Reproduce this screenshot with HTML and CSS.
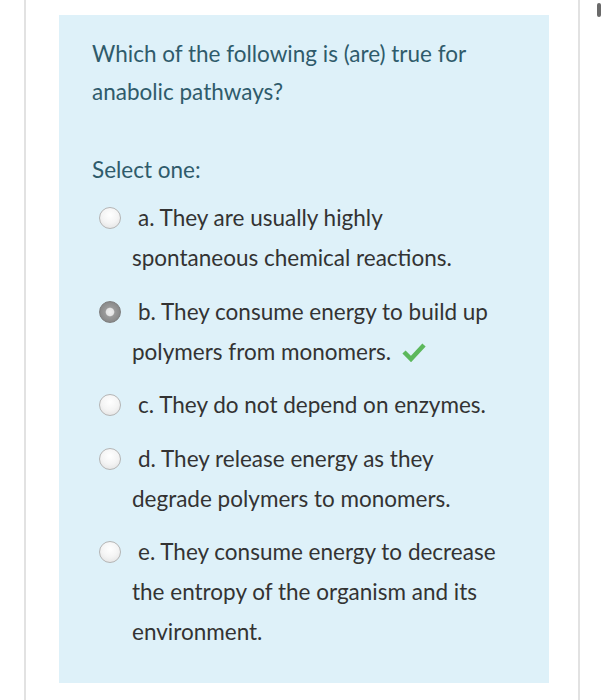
FILE: index.html
```
<!DOCTYPE html>
<html>
<head>
<meta charset="utf-8">
<link rel="stylesheet" href="styles.css">
</head>
<body>
<div class="page">
  <div class="card">
    <div class="qbox">
      <div class="qtext">Which of the following is (are) true for anabolic pathways?</div>
      <div class="prompt">Select one:</div>
      <div class="answers">
        <div class="opt"><span class="radio"></span><span class="label">a. They are usually highly spontaneous chemical reactions.</span></div>
        <div class="opt"><span class="radio checked"></span><span class="label">b. They consume energy to build up polymers from monomers. <svg class="tick" width="26" height="20" viewBox="0 0 26 20"><polyline points="3,10 10,17 23,3" fill="none" stroke="#5cb85c" stroke-width="4.5" stroke-linejoin="miter" stroke-linecap="butt"/></svg></span></div>
        <div class="opt"><span class="radio"></span><span class="label">c. They do not depend on enzymes.</span></div>
        <div class="opt"><span class="radio"></span><span class="label">d. They release energy as they degrade polymers to monomers.</span></div>
        <div class="opt"><span class="radio"></span><span class="label">e. They consume energy to decrease the entropy of the organism and its environment.</span></div>
      </div>
    </div>
  </div>
  <div class="scrollthumb"></div>
</div>
</body>
</html>
```
FILE: styles.css
```
html, body {
  margin: 0;
  padding: 0;
  background: #ffffff;
}
.page {
  position: relative;
  width: 608px;
  height: 700px;
  overflow: hidden;
  font-family: Lato, "Open Sans", sans-serif;
}
.card {
  margin-left: 24px;
  width: 556px;
  height: 700px;
  border-left: 2px solid #e2e2e2;
  border-right: 2px solid #e2e2e2;
  padding-top: 15px;
  box-sizing: border-box;
}
.qbox {
  margin-left: 33px;
  width: 490px;
  height: 668px;
  background: #def1f9;
  box-sizing: border-box;
  padding: 20px 20px 0 33px;
}
.qtext {
  color: #2f5b6b;
  font-size: 22.5px;
  line-height: 38px;
  width: 400px;
}
.prompt {
  color: #2f5b6b;
  font-size: 22.5px;
  line-height: 38px;
  margin-top: 40px;
}
.answers {
  margin-top: 9px;
}
.opt {
  display: flex;
  align-items: flex-start;
  margin-bottom: 13.5px;
}
.radio {
  flex: none;
  width: 20px;
  height: 20px;
  border: 1px solid #b5b5b5;
  border-radius: 50%;
  background: radial-gradient(circle at 50% 35%, #ffffff 0%, #f4f4f4 50%, #dedede 100%);
  margin: 9px 11px 0 7px;
}
.radio.checked {
  border-color: #7e7e7e;
  background: radial-gradient(circle at 50% 50%, #eeeeee 0%, #e4e4e4 26%, #9a9a9a 34%, #8a8a8a 70%, #7c7c7c 100%);
}
.label {
  color: #333333;
  font-size: 22.5px;
  line-height: 40px;
  text-indent: 6px;
  width: 365px;
}
.tick {
  vertical-align: -2px;
  margin-left: 4px;
}
.scrollthumb {
  position: absolute;
  left: 597px;
  top: 3px;
  width: 4px;
  height: 14px;
  border-radius: 2px;
  background: #6a6a6a;
}
```
